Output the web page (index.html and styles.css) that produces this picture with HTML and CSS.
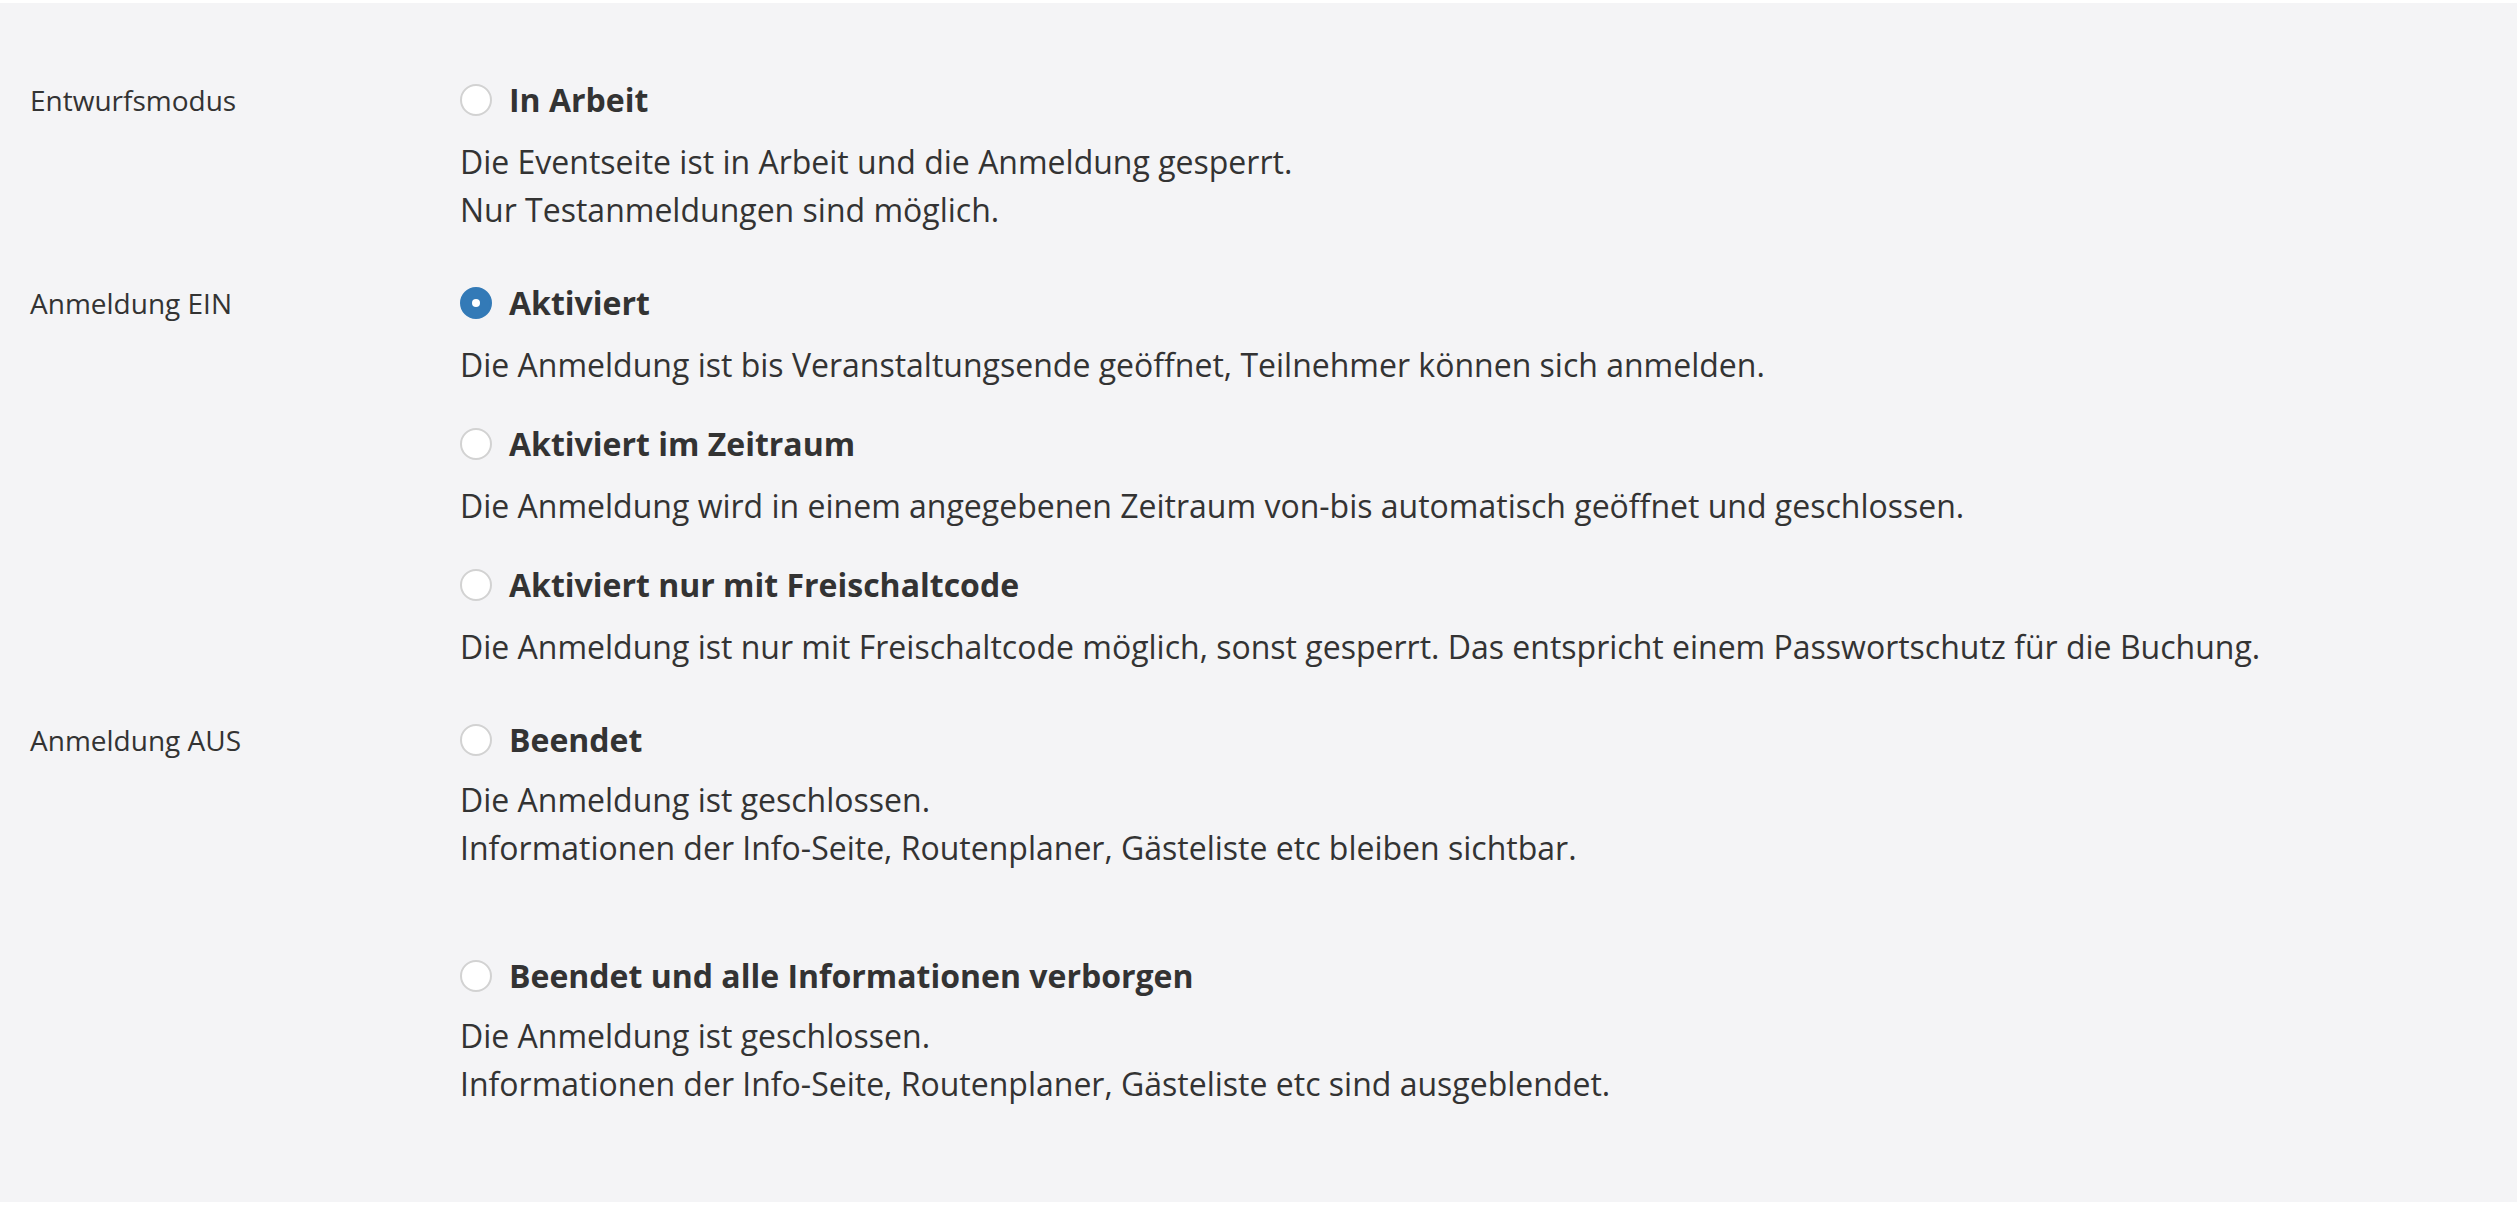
FILE: index.html
```html
<!DOCTYPE html>
<html lang="de">
<head>
<meta charset="utf-8">
<title>Anmeldestatus</title>
<link rel="stylesheet" href="styles.css">
</head>
<body>
<div class="panel">
  <div class="group">
    <div class="group-label">Entwurfsmodus</div>
    <div class="options">
      <div class="option">
        <div class="opt-title"><span class="radio"></span><span>In Arbeit</span></div>
        <div class="opt-desc">Die Eventseite ist in Arbeit und die Anmeldung gesperrt.<br>Nur Testanmeldungen sind möglich.</div>
      </div>
    </div>
  </div>
  <div class="group">
    <div class="group-label">Anmeldung EIN</div>
    <div class="options">
      <div class="option">
        <div class="opt-title"><span class="radio checked"></span><span>Aktiviert</span></div>
        <div class="opt-desc">Die Anmeldung ist bis Veranstaltungsende geöffnet, Teilnehmer können sich anmelden.</div>
      </div>
      <div class="option">
        <div class="opt-title"><span class="radio"></span><span>Aktiviert im Zeitraum</span></div>
        <div class="opt-desc">Die Anmeldung wird in einem angegebenen Zeitraum von-bis automatisch geöffnet und geschlossen.</div>
      </div>
      <div class="option">
        <div class="opt-title"><span class="radio"></span><span>Aktiviert nur mit Freischaltcode</span></div>
        <div class="opt-desc">Die Anmeldung ist nur mit Freischaltcode möglich, sonst gesperrt. Das entspricht einem Passwortschutz für die Buchung.</div>
      </div>
    </div>
  </div>
  <div class="group group-off">
    <div class="group-label">Anmeldung AUS</div>
    <div class="options">
      <div class="option option-spaced">
        <div class="opt-title"><span class="radio"></span><span>Beendet</span></div>
        <div class="opt-desc">Die Anmeldung ist geschlossen.<br>Informationen der Info-Seite, Routenplaner, Gästeliste etc bleiben sichtbar.</div>
      </div>
      <div class="option">
        <div class="opt-title"><span class="radio"></span><span>Beendet und alle Informationen verborgen</span></div>
        <div class="opt-desc">Die Anmeldung ist geschlossen.<br>Informationen der Info-Seite, Routenplaner, Gästeliste etc sind ausgeblendet.</div>
      </div>
    </div>
  </div>
</div>
</body>
</html>
```

FILE: styles.css
```css
html, body {
  margin: 0;
  padding: 0;
  background: #ffffff;
}

body {
  font-family: "Open Sans", "Noto Sans", sans-serif;
  color: #333333;
  padding-top: 3px;
}

.panel {
  background: #f4f4f6;
  height: 1199px;
  margin-right: 1px;
  box-sizing: border-box;
  padding: 73px 0 0 30px;
  display: flex;
  flex-direction: column;
  gap: 45px;
}

.group {
  display: grid;
  grid-template-columns: 430px 1fr;
}

.group-label {
  font-size: 28px;
  line-height: 48px;
}

.options {
  display: flex;
  flex-direction: column;
  gap: 31px;
}

.option-spaced {
  margin-bottom: 49px;
}

.opt-title {
  display: flex;
  align-items: center;
  gap: 17px;
  font-size: 32px;
  line-height: 48px;
  font-weight: 700;
}

.radio {
  width: 32px;
  height: 32px;
  box-sizing: border-box;
  border-radius: 50%;
  border: 2px solid #d2d2d2;
  background: #ffffff;
  flex: none;
  display: flex;
  align-items: center;
  justify-content: center;
}

.radio.checked {
  background: #337ab7;
  border-color: #337ab7;
}

.radio.checked::after {
  content: "";
  width: 8px;
  height: 8px;
  border-radius: 50%;
  background: #ffffff;
}

.opt-desc {
  margin-top: 14px;
  font-size: 32px;
  line-height: 48px;
}

.group-off .opt-desc {
  margin-top: 12px;
}
```
